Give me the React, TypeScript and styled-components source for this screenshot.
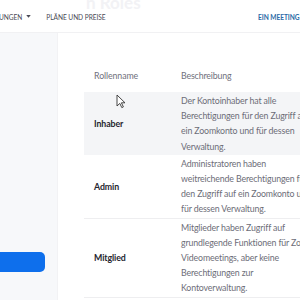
import React from "react";
import styled, { createGlobalStyle } from "styled-components";

const Global = createGlobalStyle`
  html, body { margin: 0; padding: 0; background: #fff; }
  body { width: 300px; height: 300px; overflow: hidden; font-family: Lato, "Open Sans", sans-serif; }
`;

const Page = styled.div`
  width: 300px;
  height: 300px;
  overflow: hidden;
  display: flex;
  flex-direction: column;
  position: relative;
  font-family: Lato, "Open Sans", sans-serif;
`;

const Nav = styled.div`
  height: 33px;
  flex: none;
  display: flex;
  align-items: center;
  border-bottom: 1px solid #f1f1f3;
  position: relative;
  box-sizing: border-box;
  padding-top: 1px;
`;

const NavItem = styled.div<{ $blue?: boolean; $ml?: number }>`
  font-size: 6.6px;
  letter-spacing: -0.05px;
  text-transform: uppercase;
  white-space: nowrap;
  color: ${(p) => (p.$blue ? "#2b6aa6" : "#4a4a55")};
  font-weight: ${(p) => (p.$blue ? 700 : 400)};
  margin-left: ${(p) => p.$ml ?? 0}px;
  display: flex;
  align-items: center;
  gap: 4px;
`;

const Spacer = styled.div`
  flex: 1;
`;

const RightSlot = styled.div`
  width: 42px;
  flex: none;
  display: flex;
`;

const Ghost = styled.div`
  position: absolute;
  left: 86px;
  top: -6px;
  font-size: 17px;
  line-height: 1;
  font-weight: 700;
  color: #f2f2f5;
  white-space: nowrap;
`;

const Body = styled.div`
  flex: 1;
  display: flex;
`;

const Sidebar = styled.div`
  width: 58px;
  flex: none;
  background: #f7f8fa;
  border-right: 1px solid #f2f2f4;
  box-sizing: border-box;
  padding-top: 219px;
`;

const BlueButton = styled.div`
  width: 45px;
  height: 20px;
  background: #0e6fec;
  border-radius: 0 5px 5px 0;
`;

const Main = styled.div`
  flex: 1;
  padding: 26px 0 0 26px;
  min-width: 0;
`;

const Table = styled.div`
  width: 260px;
`;

const Row = styled.div<{ $shade?: boolean; $head?: boolean }>`
  display: flex;
  align-items: center;
  background: ${(p) => (p.$shade ? "#f4f5f7" : "transparent")};
  border-bottom: ${(p) => (p.$head || p.$shade ? "none" : "1px solid #eeeef0")};
  min-height: ${(p) => (p.$head ? 33 : 0)}px;
  padding: ${(p) => (p.$head ? 0 : 1)}px 0;
  box-sizing: border-box;
`;

const NameCell = styled.div<{ $head?: boolean }>`
  width: 97px;
  flex: none;
  padding-left: 10px;
  box-sizing: border-box;
  font-size: 8.8px;
  letter-spacing: -0.1px;
  color: ${(p) => (p.$head ? "#70707c" : "#26262f")};
  font-weight: ${(p) => (p.$head ? 400 : 700)};
`;

const DescCell = styled.div<{ $head?: boolean; $w?: number }>`
  width: ${(p) => p.$w ?? 133}px;
  flex: none;
  font-size: 8.8px;
  letter-spacing: -0.15px;
  line-height: 15.2px;
  color: ${(p) => (p.$head ? "#70707c" : "#6d6d78")};
`;

const Cursor = styled.svg`
  position: absolute;
  left: 116px;
  top: 94px;
`;

const rows = [
  {
    name: "Inhaber",
    desc: "Der Kontoinhaber hat alle Berechtigungen für den Zugriff auf ein Zoomkonto und für dessen Verwaltung.",
    shade: true,
    w: 133,
  },
  {
    name: "Admin",
    desc: "Administratoren haben weitreichende Berechtigungen für den Zugriff auf ein Zoomkonto und für dessen Verwaltung.",
    w: 133,
  },
  {
    name: "Mitglied",
    desc: "Mitglieder haben Zugriff auf grundlegende Funktionen für Zoom-Videomeetings, aber keine Berechtigungen zur Kontoverwaltung.",
    w: 138,
  },
];

export default function App() {
  return (
    <Page>
      <Global />
      <Nav>
        <Ghost>n Roles</Ghost>
        <NavItem $ml={-1}>
          UNGEN
          <svg width="5" height="3" viewBox="0 0 6 4">
            <path d="M0 0 L6 0 L3 3.5 Z" fill="#4a4a55" />
          </svg>
        </NavItem>
        <NavItem $ml={15}>PLÄNE UND PREISE</NavItem>
        <Spacer />
        <RightSlot>
          <NavItem $blue>EIN MEETING PLANEN</NavItem>
        </RightSlot>
      </Nav>
      <Body>
        <Sidebar>
          <BlueButton />
        </Sidebar>
        <Main>
          <Table>
            <Row $head>
              <NameCell $head>Rollenname</NameCell>
              <DescCell $head>Beschreibung</DescCell>
            </Row>
            {rows.map((r) => (
              <Row key={r.name} $shade={r.shade}>
                <NameCell>{r.name}</NameCell>
                <DescCell $w={r.w}>{r.desc}</DescCell>
              </Row>
            ))}
          </Table>
        </Main>
      </Body>
      <Cursor width="10" height="15" viewBox="0 0 10 15">
        <path d="M1 1 L1 12 L3.8 9.4 L5.8 13.6 L7.4 12.9 L5.4 8.8 L9 8.8 Z" fill="#fff" stroke="#333" strokeWidth="0.9" strokeLinejoin="round" />
      </Cursor>
    </Page>
  );
}
